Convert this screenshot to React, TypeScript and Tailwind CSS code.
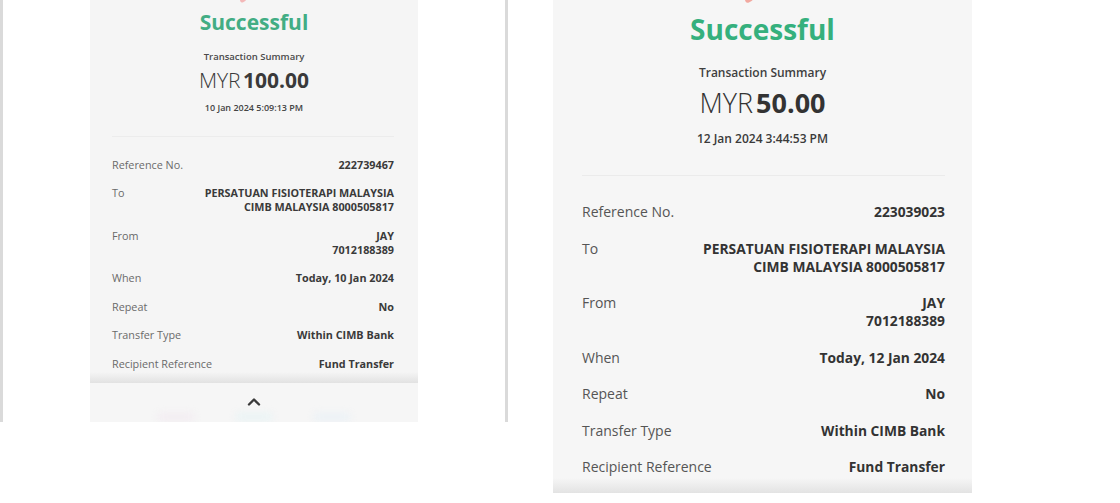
import React from 'react';

type Row = { label: string; value: string[] };

const rowsFor = (ref: string, date: string): Row[] => [
  { label: 'Reference No.', value: [ref] },
  { label: 'To', value: ['PERSATUAN FISIOTERAPI MALAYSIA', 'CIMB MALAYSIA 8000505817'] },
  { label: 'From', value: ['JAY', '7012188389'] },
  { label: 'When', value: [`Today, ${date}`] },
  { label: 'Repeat', value: ['No'] },
  { label: 'Transfer Type', value: ['Within CIMB Bank'] },
  { label: 'Recipient Reference', value: ['Fund Transfer'] }
];

function Chevron() {
  return (
    <svg width="14" height="9" viewBox="0 0 14 9" fill="none">
      <polyline points="2,7.5 7,2.5 12,7.5" stroke="#3a3a3a" strokeWidth="2.4" strokeLinecap="round" strokeLinejoin="round" />
    </svg>
  );
}

function SmallReceipt() {
  const rows = rowsFor('222739467', '10 Jan 2024');
  return (
    <div className="w-[328px] h-[422px] bg-[#f5f5f5] flex flex-col overflow-hidden">
      <div className="h-[3px] flex justify-center">
        <div className="ml-[-22px] mt-[-2px] w-[6px] h-[4px] rounded-full bg-[#f3b8b8] rotate-[-30deg]" />
      </div>
      <div className="mt-[5px] h-[28px] leading-[28px] text-center text-[21px] font-bold text-[#42ad84]">Successful</div>
      <div className="mt-[14px] h-[14px] leading-[14px] text-center text-[9.5px] font-semibold text-[#4a4a4a]">Transaction Summary</div>
      <div className="mt-[2px] h-[28px] leading-[28px] text-center text-[21px] text-[#3a3a3a]">
        <span className="font-light">MYR</span> <span className="font-bold ml-[-3px]">100.00</span>
      </div>
      <div className="mt-[8px] h-[12px] leading-[12px] text-center text-[9px] font-semibold text-[#444]">10 Jan 2024 5:09:13 PM</div>
      <div className="mt-[22px] mx-[22px] mr-[24px] h-px bg-[#ececec]" />
      <div className="mt-[21px] pl-[22px] pr-[24px] flex flex-col gap-[14.5px]">
        {rows.map((r) => (
          <div key={r.label} className="flex justify-between text-[10.8px] leading-[14px]">
            <span className="text-[#6a6a6a]">{r.label}</span>
            <div className="text-right font-bold text-[#3a3a3a]">
              {r.value.map((v) => (
                <div key={v}>{v}</div>
              ))}
            </div>
          </div>
        ))}
      </div>
      <div className="mt-[1px] h-[13px] bg-gradient-to-b from-[#f5f5f5] to-[#e2e2e2]" />
      <div className="flex-1 bg-[#f6f6f6] flex flex-col items-center">
        <div className="mt-[14px]">
          <Chevron />
        </div>
        <div className="mt-[6px] flex gap-[40px]">
          <div className="w-[38px] h-[10px] rounded-full bg-[#f3eef2] blur-[3px]" />
          <div className="w-[38px] h-[10px] rounded-full bg-[#ecf4f5] blur-[3px]" />
          <div className="w-[38px] h-[10px] rounded-full bg-[#edf2f6] blur-[3px]" />
        </div>
      </div>
    </div>
  );
}

function LargeReceipt() {
  const rows = rowsFor('223039023', '12 Jan 2024');
  return (
    <div className="w-[419px] h-[493px] bg-[#f6f6f6] flex flex-col overflow-hidden">
      <div className="h-[4px] flex justify-center">
        <div className="ml-[-28px] mt-[-3px] w-[8px] h-[5px] rounded-full bg-[#f2a9a0] rotate-[-30deg]" />
      </div>
      <div className="mt-[7px] h-[36px] leading-[36px] text-center text-[28px] font-bold text-[#35b07d]">Successful</div>
      <div className="mt-[17px] h-[18px] leading-[18px] text-center text-[12px] font-semibold text-[#3f3f3f]">Transaction Summary</div>
      <div className="mt-[3px] h-[36px] leading-[36px] text-center text-[27px] text-[#333]">
        <span className="font-light">MYR</span> <span className="font-bold ml-[-4px]">50.00</span>
      </div>
      <div className="mt-[9px] h-[18px] leading-[18px] text-center text-[12px] font-semibold text-[#3a3a3a]">12 Jan 2024 3:44:53 PM</div>
      <div className="mt-[27px] ml-[29px] mr-[27px] h-px bg-[#ebebeb]" />
      <div className="mt-[27px] pl-[29px] pr-[27px] flex flex-col gap-[18.5px]">
        {rows.map((r) => (
          <div key={r.label} className="flex justify-between text-[14px] leading-[18px]">
            <span className="text-[#555]">{r.label}</span>
            <div className="text-right font-bold text-[#333] text-[13.8px]">
              {r.value.map((v) => (
                <div key={v}>{v}</div>
              ))}
            </div>
          </div>
        ))}
      </div>
      <div className="flex-1" />
      <div className="h-[15px] bg-gradient-to-b from-[#f6f6f6] to-[#e3e3e3]" />
    </div>
  );
}

export default function App() {
  return (
    <div className="w-[1120px] h-[503px] bg-white flex items-start font-['Open_Sans',sans-serif]">
      <div className="w-[508px] h-[422px] border-l-[3px] border-r-[3px] border-[#dadada] bg-white pl-[87px]">
        <SmallReceipt />
      </div>
      <div className="ml-[45px]">
        <LargeReceipt />
      </div>
    </div>
  );
}
